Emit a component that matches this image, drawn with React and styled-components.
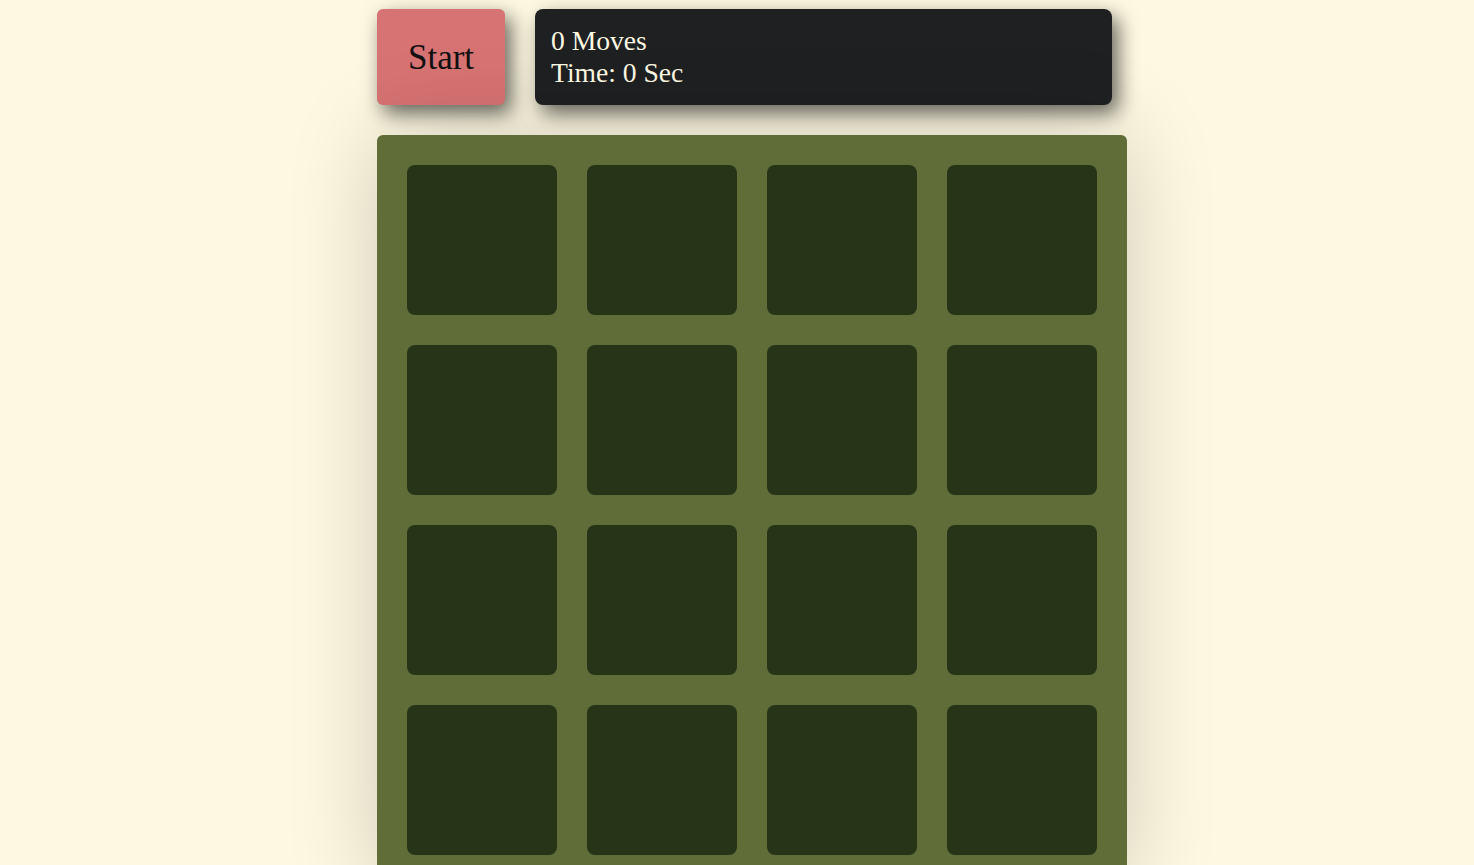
import React from 'react';
import styled, { createGlobalStyle } from 'styled-components';

const GlobalStyle = createGlobalStyle`
    body {
        margin: 0;
        background: #fdf8e1;
        font-family: "Liberation Serif", "Times New Roman", serif;
        overflow: hidden;
    }
`;

const cards = Array.from({ length: 16 }, (_, i) => i);

function App() {
    return (
        <>
            <GlobalStyle />
            <Page>
                <TopBar>
                    <StartButton>Start</StartButton>
                    <Stats>
                        <div>0 Moves</div>
                        <div>Time: 0 Sec</div>
                    </Stats>
                </TopBar>
                <Board>
                    {cards.map((i) => (
                        <Card key={i} />
                    ))}
                </Board>
            </Page>
        </>
    );
}

const Page = styled.div`
    display: flex;
    flex-direction: column;
    gap: 30px;
    padding: 9px 0 0 377px;
`;

const TopBar = styled.div`
    display: flex;
    gap: 30px;
`;

const StartButton = styled.button`
    width: 128px;
    height: 96px;
    border: none;
    border-radius: 6px;
    background: #d77373;
    color: #111;
    font-family: "Liberation Serif", serif;
    font-size: 35px;
    padding: 2px 0 0;
    box-shadow: 6px 8px 20px rgba(0, 0, 0, 0.6);
    cursor: pointer;
`;

const Stats = styled.div`
    width: 577px;
    box-sizing: border-box;
    padding: 16px;
    border-radius: 8px;
    background: #1e2021;
    color: #fdf8e1;
    font-size: 27.6px;
    line-height: 32px;
    box-shadow: 6px 8px 20px rgba(0, 0, 0, 0.6);
`;

const Board = styled.div`
    width: 750px;
    box-sizing: border-box;
    padding: 30px;
    display: grid;
    grid-template-columns: repeat(4, 150px);
    gap: 30px;
    background: #616d38;
    border-radius: 6px;
    box-shadow: 0 0 90px rgba(0, 0, 0, 0.18);
`;

const Card = styled.div`
    width: 150px;
    height: 150px;
    border-radius: 8px;
    background: #273418;
`;

export default App;
